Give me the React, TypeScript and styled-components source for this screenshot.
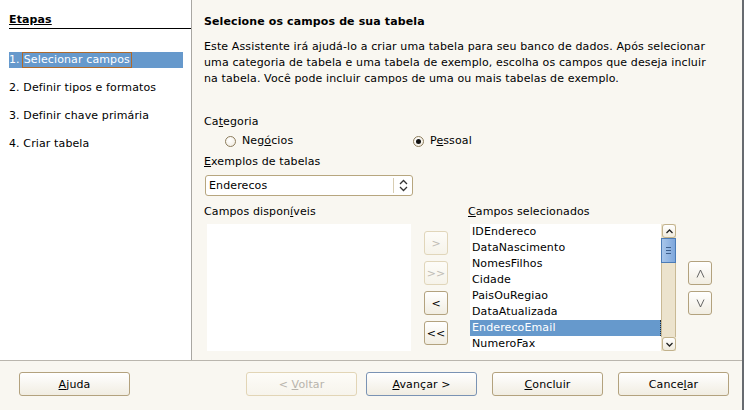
import styled, { createGlobalStyle } from "styled-components";

const GlobalStyle = createGlobalStyle`
  html, body {
    margin: 0;
    padding: 0;
    background: #f9f7f1;
  }
  body {
    font-family: "DejaVu Sans", "Liberation Sans", sans-serif;
    font-size: 11px;
    letter-spacing: 0.12px;
    color: #000;
  }
`;

const StyledWindow = styled.div`
  width: 742px;
  height: 410px;
  border-right: 2px solid #676b70;
  background: #f9f7f1;
  display: flex;
  flex-direction: column;
  overflow: hidden;
`;

const StyledMain = styled.div`
  display: flex;
  height: 360px;
  border-bottom: 1px solid #bab6ae;
`;

const StyledSteps = styled.div`
  width: 192px;
  background: #fff;
  border-right: 1px solid #a9a7a2;
  padding-left: 9px;
  box-sizing: border-box;
`;

const StyledStepsTitle = styled.div`
  margin-top: 13px;
  height: 15px;
  line-height: 14px;
  font-weight: bold;
  text-decoration: underline;
  border-bottom: 1px solid #000;
`;

const StyledStepList = styled.div`
  margin-top: 23px;
  display: flex;
  flex-direction: column;
  gap: 12px;
  margin-right: 8px;
`;

const StyledStep = styled.div<{ $active?: boolean }>`
  height: 16px;
  line-height: 16px;
  display: flex;
  white-space: nowrap;
  background: ${(p) => (p.$active ? "#6699cc" : "transparent")};
  color: ${(p) => (p.$active ? "#fff" : "#000")};
`;

const StyledFocus = styled.span`
  border: 1px solid #b06a2a;
  margin-left: 2px;
  padding: 0 1px;
  line-height: 14px;
`;

const StyledContent = styled.div`
  flex: 1;
  padding: 14px 0 0 12px;
  display: flex;
  flex-direction: column;
`;

const StyledTitle = styled.div`
  font-weight: bold;
  line-height: 16px;
`;

const StyledIntro = styled.p`
  margin: 9px 0 0;
  line-height: 16px;
  white-space: nowrap;
`;

const StyledLabel = styled.div<{ $top: number }>`
  margin-top: ${(p) => p.$top}px;
  line-height: 16px;
  white-space: nowrap;
`;

const StyledRadioRow = styled.div`
  display: flex;
  margin-top: 3px;
  height: 16px;
  padding-left: 21px;
`;

const StyledRadio = styled.label`
  display: flex;
  align-items: center;
  gap: 6px;
  width: 188px;
  line-height: 16px;
`;

const StyledRadioDot = styled.span<{ $checked?: boolean }>`
  width: 11px;
  height: 11px;
  border-radius: 50%;
  border: 1px solid #8c7c5c;
  background: radial-gradient(circle at 40% 35%, #ffffff, #efe9dc);
  box-sizing: border-box;
  display: flex;
  align-items: center;
  justify-content: center;
  &::after {
    content: "";
    display: ${(p) => (p.$checked ? "block" : "none")};
    width: 5px;
    height: 5px;
    border-radius: 50%;
    background: #111;
  }
`;

const StyledCombo = styled.div`
  margin-top: 5px;
  margin-left: 1px;
  width: 208px;
  height: 21px;
  box-sizing: border-box;
  border: 1px solid #b7a67f;
  border-radius: 3px;
  background: #fff;
  display: flex;
  align-items: center;
`;

const StyledComboText = styled.span`
  flex: 1;
  padding-left: 3px;
`;

const StyledComboArrow = styled.span`
  width: 18px;
  height: 15px;
  border-left: 1px solid #d8cdb2;
  display: flex;
  align-items: center;
  justify-content: center;
`;

const StyledFieldLabels = styled.div`
  display: flex;
  margin-top: 8px;
  line-height: 16px;
  > span:first-child {
    width: 264px;
  }
`;

const StyledFields = styled.div`
  display: flex;
  margin-top: 4px;
  height: 127px;
`;

const StyledListBox = styled.div<{ $width: number; $left?: number }>`
  width: ${(p) => p.$width}px;
  margin-left: ${(p) => p.$left ?? 0}px;
  height: 127px;
  background: #fff;
  display: flex;
`;

const StyledButtonColumn = styled.div<{ $top: number }>`
  display: flex;
  flex-direction: column;
  gap: 6px;
  padding-top: ${(p) => p.$top}px;
  margin: 0 ${(p) => (p.$top > 30 ? 0 : 22)}px 0 ${(p) => (p.$top > 30 ? 12 : 13)}px;
`;

const StyledSmallButton = styled.button`
  width: 24px;
  height: 24px;
  padding: 0;
  font-family: "DejaVu Sans", sans-serif;
  font-size: 11px;
  color: #000;
  border: 1px solid #b3a27e;
  border-radius: 3px;
  background: linear-gradient(#ffffff, #f1ede2);
  display: flex;
  align-items: center;
  justify-content: center;
  &:disabled {
    border-color: #e1d6ba;
    color: #c0bcb4;
    background: linear-gradient(#fdfcf8, #f6f3ea);
  }
`;

const StyledItems = styled.div`
  flex: 1;
  display: flex;
  flex-direction: column;
`;

const StyledItem = styled.div<{ $selected?: boolean }>`
  height: 16px;
  line-height: 16px;
  padding-left: 2px;
  white-space: nowrap;
  background: ${(p) => (p.$selected ? "#6699cc" : "transparent")};
  color: ${(p) => (p.$selected ? "#fff" : "#000")};
  border-right: ${(p) => (p.$selected ? "1px dotted #203040" : "none")};
`;

const StyledScrollbar = styled.div`
  width: 15px;
  display: flex;
  flex-direction: column;
  background: #ece3cd;
`;

const StyledScrollArrow = styled.div`
  height: 14px;
  width: 14px;
  margin-left: 1px;
  box-sizing: border-box;
  border: 1px solid #c2b28c;
  border-radius: 3px;
  background: linear-gradient(#ffffff, #f0ebdd);
  display: flex;
  align-items: center;
  justify-content: center;
`;

const StyledScrollTrack = styled.div`
  flex: 1;
  border-left: 1px solid #c9b994;
  border-right: 1px solid #c9b994;
`;

const StyledThumb = styled.div`
  height: 25px;
  box-sizing: border-box;
  margin: 0 -1px;
  border: 1px solid #4c7cb6;
  background: linear-gradient(90deg, #a8c6ea, #7ea7dc);
  display: flex;
  flex-direction: column;
  align-items: center;
  justify-content: center;
  gap: 2px;
  > i {
    display: block;
    width: 5px;
    height: 1px;
    background: #3d5f8c;
  }
`;

const StyledFooter = styled.div`
  display: flex;
  padding: 11px 0 0 19px;
`;

const StyledButton = styled.button<{ $default?: boolean; $gap: number }>`
  width: 111px;
  height: 24px;
  margin-left: ${(p) => p.$gap}px;
  font-family: "DejaVu Sans", sans-serif;
  font-size: 11px;
  letter-spacing: 0.12px;
  color: #000;
  border: 1px solid ${(p) => (p.$default ? "#7a93b4" : "#b3a27e")};
  border-radius: 3px;
  background: linear-gradient(#ffffff, #f1ede2);
  padding: 0;
  &:disabled {
    border-color: #e2d5b6;
    color: #b8b4ac;
    background: linear-gradient(#fdfcf8, #f7f4ec);
  }
`;

const Chevron = ({ dir }: { dir: "up" | "down" }) => (
  <svg width="7" height="5" viewBox="0 0 7 5">
    <path
      d={dir === "up" ? "M0.5 4L3.5 1L6.5 4" : "M0.5 1L3.5 4L6.5 1"}
      fill="none"
      stroke="#222"
      strokeWidth="1.3"
    />
  </svg>
);

const MoveIcon = ({ dir }: { dir: "up" | "down" }) => (
  <svg width="9" height="9" viewBox="0 0 9 9">
    <path
      d={dir === "up" ? "M1 8.5L4.5 1L8 8.5" : "M1 0.5L4.5 8L8 0.5"}
      fill="none"
      stroke="#555"
      strokeWidth="0.9"
    />
  </svg>
);

const fields = [
  "IDEndereco",
  "DataNascimento",
  "NomesFilhos",
  "Cidade",
  "PaisOuRegiao",
  "DataAtualizada",
  "EnderecoEmail",
  "NumeroFax",
];

const App = () => {
  return (
    <>
      <GlobalStyle />
      <StyledWindow>
        <StyledMain>
          <StyledSteps>
            <StyledStepsTitle>Etapas</StyledStepsTitle>
            <StyledStepList>
              <StyledStep $active>
                1.<StyledFocus>Selecionar campos</StyledFocus>
              </StyledStep>
              <StyledStep>2. Definir tipos e formatos</StyledStep>
              <StyledStep>3. Definir chave primária</StyledStep>
              <StyledStep>4. Criar tabela</StyledStep>
            </StyledStepList>
          </StyledSteps>
          <StyledContent>
            <StyledTitle>Selecione os campos de sua tabela</StyledTitle>
            <StyledIntro>
              Este Assistente irá ajudá-lo a criar uma tabela para seu banco de dados. Após selecionar
              <br />
              uma categoria de tabela e uma tabela de exemplo, escolha os campos que deseja incluir
              <br />
              na tabela. Você pode incluir campos de uma ou mais tabelas de exemplo.
            </StyledIntro>
            <StyledLabel $top={27}>
              Ca<u>t</u>egoria
            </StyledLabel>
            <StyledRadioRow>
              <StyledRadio>
                <StyledRadioDot />
                <span>
                  Neg<u>ó</u>cios
                </span>
              </StyledRadio>
              <StyledRadio>
                <StyledRadioDot $checked />
                <span>
                  P<u>e</u>ssoal
                </span>
              </StyledRadio>
            </StyledRadioRow>
            <StyledLabel $top={5}>
              <u>E</u>xemplos de tabelas
            </StyledLabel>
            <StyledCombo>
              <StyledComboText>Enderecos</StyledComboText>
              <StyledComboArrow>
                <svg width="9" height="13" viewBox="0 0 9 13">
                  <path d="M1 5L4.5 1.5L8 5M1 8L4.5 11.5L8 8" fill="none" stroke="#333" strokeWidth="1.3" />
                </svg>
              </StyledComboArrow>
            </StyledCombo>
            <StyledFieldLabels>
              <span>
                Campos dispon<u>í</u>veis
              </span>
              <span>
                <u>C</u>ampos selecionados
              </span>
            </StyledFieldLabels>
            <StyledFields>
              <StyledListBox $width={204} $left={3} />
              <StyledButtonColumn $top={7}>
                <StyledSmallButton disabled>&gt;</StyledSmallButton>
                <StyledSmallButton disabled>&gt;&gt;</StyledSmallButton>
                <StyledSmallButton>&lt;</StyledSmallButton>
                <StyledSmallButton>&lt;&lt;</StyledSmallButton>
              </StyledButtonColumn>
              <StyledListBox $width={206}>
                <StyledItems>
                  {fields.map((f) => (
                    <StyledItem key={f} $selected={f === "EnderecoEmail"}>
                      {f}
                    </StyledItem>
                  ))}
                </StyledItems>
                <StyledScrollbar>
                  <StyledScrollArrow>
                    <Chevron dir="up" />
                  </StyledScrollArrow>
                  <StyledScrollTrack>
                    <StyledThumb>
                      <i />
                      <i />
                      <i />
                    </StyledThumb>
                  </StyledScrollTrack>
                  <StyledScrollArrow>
                    <Chevron dir="down" />
                  </StyledScrollArrow>
                </StyledScrollbar>
              </StyledListBox>
              <StyledButtonColumn $top={37}>
                <StyledSmallButton>
                  <MoveIcon dir="up" />
                </StyledSmallButton>
                <StyledSmallButton>
                  <MoveIcon dir="down" />
                </StyledSmallButton>
              </StyledButtonColumn>
            </StyledFields>
          </StyledContent>
        </StyledMain>
        <StyledFooter>
          <StyledButton $gap={0}>
            <u>A</u>juda
          </StyledButton>
          <StyledButton $gap={116} disabled>
            &lt; <u>V</u>oltar
          </StyledButton>
          <StyledButton $gap={9} $default>
            <u>A</u>vançar &gt;
          </StyledButton>
          <StyledButton $gap={15}>
            <u>C</u>oncluir
          </StyledButton>
          <StyledButton $gap={15}>
            Cance<u>l</u>ar
          </StyledButton>
        </StyledFooter>
      </StyledWindow>
    </>
  );
};

export default App;
